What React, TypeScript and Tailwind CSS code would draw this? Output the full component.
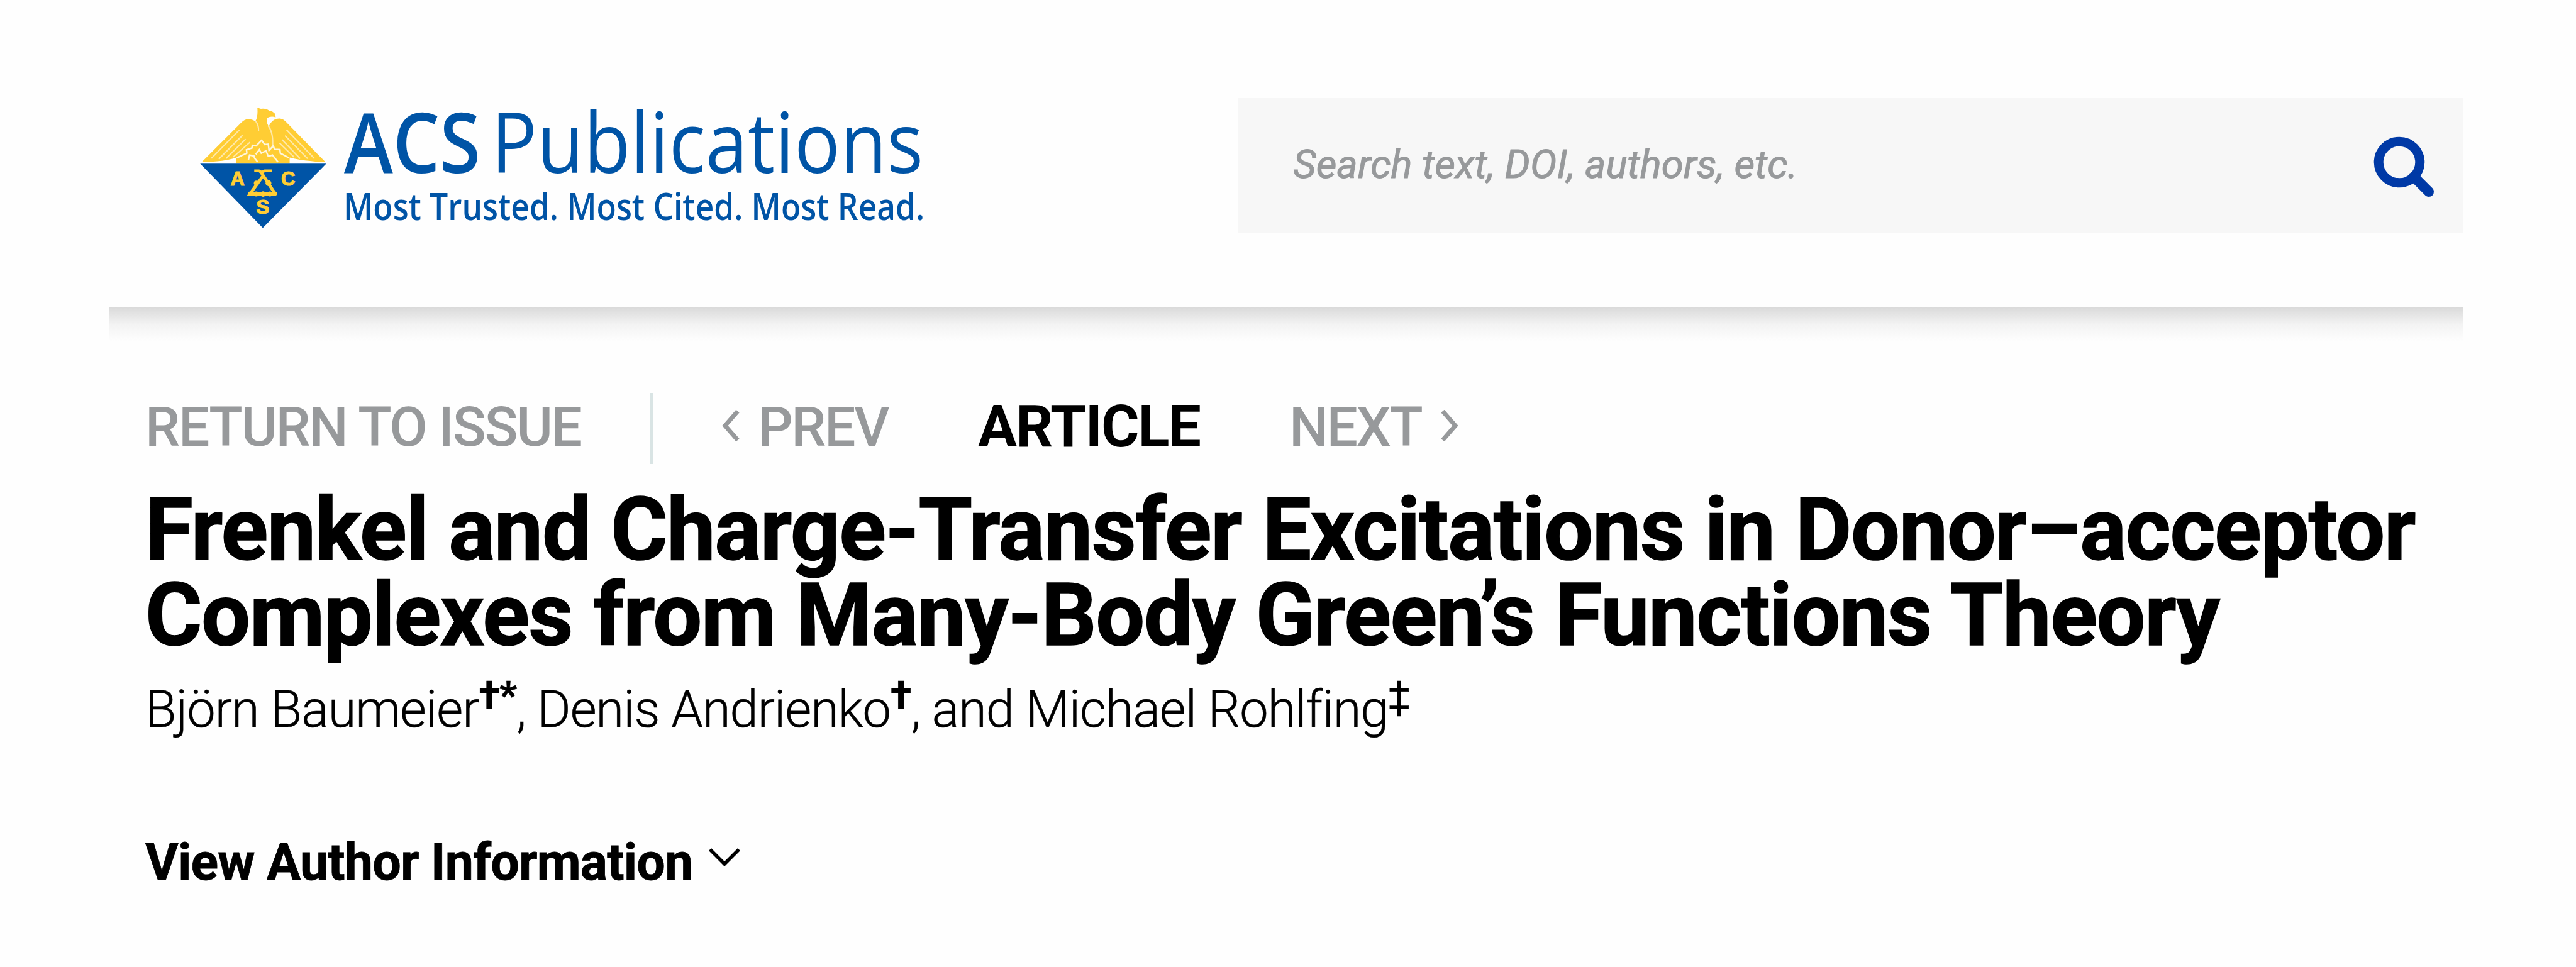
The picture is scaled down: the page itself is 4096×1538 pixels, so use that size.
const Chevron = ({ className, d }: { className: string; d: string }) => (
  <svg viewBox="0 0 28 50" fill="none" className={className} aria-hidden="true">
    <path d={d} stroke="currentColor" strokeWidth="7" />
  </svg>
);

// Eagle over the blue triangle, drawn on a 780 x 720 grid
const AcsEmblem = () => (
  <svg viewBox="60 36 656 628" className="h-[195px] w-[203px] shrink-0" aria-hidden="true">
    <g fill="#ffcd34">
      <path d="M72 322 L276 118 Q306 88 348 112 Q362 88 358 42 L376 48 Q402 44 420 58 Q452 62 452 92 Q430 84 410 94 Q400 112 416 140 Q434 98 472 98 Q492 100 508 118 L708 322 Q600 318 524 298 L524 330 L250 330 L250 300 Q170 322 72 322Z" />
    </g>
    <g fill="none" stroke="#ffe9a8" strokeWidth="7">
      <path d="M266 156 L122 302 M282 184 L160 306 M298 204 L196 304 M320 220 L234 296" />
      <path d="M508 156 L650 302 M500 186 L616 304 M484 206 L578 304 M472 224 L546 296" />
      <path d="M350 112 Q366 134 364 164 M414 136 Q442 172 436 250" />
    </g>
    <g fill="none" stroke="#fff6dc" strokeWidth="8">
      <path d="M252 300 L304 276 L302 258 L330 250 L332 236 L352 238 L380 210 L396 232 L414 230 L418 262 L440 238 L446 256 L474 258 L476 276 L520 300" />
      <path d="M312 310 L318 286 L340 290 L344 302 L360 322 M350 282 L368 258 L378 276 L402 264 L414 292 L436 286 L464 322" />
    </g>
    <path d="M64 330 H712 L386 660Z" fill="#0054a6" />
    <g fill="none" stroke="#ffcd34" strokeWidth="14">
      <path d="M342 367 H366 L380 374 L396 367 H432" />
      <path d="M374 370 L446 480 M392 386 L320 486 H452" strokeWidth="16" />
    </g>
    <g fill="#ffcd34">
      <circle cx="353" cy="430" r="13" />
      <circle cx="415" cy="430" r="15" />
      <circle cx="322" cy="484" r="11" />
      <circle cx="352" cy="486" r="13" />
      <circle cx="387" cy="486" r="14" />
      <circle cx="422" cy="486" r="13" />
      <circle cx="448" cy="484" r="11" />
    </g>
    <g fill="#ffcd34" fontFamily="Liberation Sans, sans-serif" fontWeight="700" fontSize="100" textAnchor="middle" stroke="#ffcd34" strokeWidth="4">
      <text x="256" y="442">A</text>
      <text x="516" y="442">C</text>
      <text x="386" y="589">S</text>
    </g>
  </svg>
);

const Logo = () => (
  <div className="flex items-start">
    <AcsEmblem />
    <svg
      viewBox="-8 -44 970 264"
      className="mt-[-44px] ml-[21px] h-[264px] w-[970px] shrink-0"
      fill="#0054a6"
      fontFamily="'Open Sans', sans-serif"
    >
      <text x="-2" y="106.4" fontSize="133" fontWeight="600" textLength="217" lengthAdjust="spacingAndGlyphs">ACS</text>
      <text x="232" y="106.4" fontSize="133" fontWeight="400" textLength="687" lengthAdjust="spacingAndGlyphs">Publications</text>
      <text x="-3" y="181.4" fontSize="60" fontWeight="600" textLength="924" lengthAdjust="spacingAndGlyphs">Most Trusted. Most Cited. Most Read.</text>
    </svg>
  </div>
);

const SearchIcon = () => (
  <svg viewBox="0 0 98 98" fill="none" stroke="#0039a6" className="mt-[5px] h-[98px] w-[98px]" aria-hidden="true">
    <circle cx="41" cy="41" r="32.8" strokeWidth="15" />
    <path d="M64 64 L88 88" strokeWidth="16" strokeLinecap="round" />
  </svg>
);

export default function App() {
  return (
    <div className="h-[1538px] w-[4096px] overflow-hidden bg-[#fefefe] pl-[174px] font-['Roboto',sans-serif] text-black">
      <header className="flex h-[489px] w-[3742px] items-start">
        <div className="w-[1794px] pt-[169px] pl-[143px]">
          <Logo />
        </div>
        <div className="mt-[156px] flex h-[215px] w-[1948px] items-center justify-between bg-[#f7f7f7] pr-[44px] pl-[88px]">
          <span className="pb-[4px] text-[63.6px] leading-none text-[#97999b] italic [-webkit-text-stroke:1px_#97999b]">
            Search text, DOI, authors, etc.
          </span>
          <SearchIcon />
        </div>
      </header>
      <div className="h-[54px] w-[3742px] bg-linear-to-b from-[#dadada] via-[#f3f3f3] to-[#fefefe]" />

      <main className="pl-[57px]">
        <nav className="mt-[82px] flex h-[113px] items-center text-[87.7px] leading-none font-medium tracking-[-2.2px] text-[#97999b]">
          <span className="w-[802px] pb-[3px]">RETURN TO ISSUE</span>
          <span className="h-[113px] w-[6px] bg-[#d9e4e4]" />
          <Chevron className="mb-[10px] ml-[109px] h-[50px] w-[28px]" d="M25 2 L5 25 L25 48" />
          <span className="ml-[29px] w-[350px] pb-[3px] tracking-[-2.6px]">PREV</span>
          <span className="w-[495px] pb-[5px] text-[92.5px] font-bold tracking-[-1.8px] text-black">
            ARTICLE
          </span>
          <span className="w-[241px] pb-[3px] tracking-[-2.6px]">NEXT</span>
          <Chevron className="mb-[10px] h-[50px] w-[28px]" d="M3 2 L23 25 L3 48" />
        </nav>

        <h1 className="mt-[37px] text-[138.3px] leading-[136px] font-bold tracking-[-1.45px] whitespace-nowrap [-webkit-text-stroke:1.5px_#000]">
          Frenkel and Charge-Transfer Excitations in Donor–acceptor
          <br />
          Complexes from Many-Body Green’s Functions Theory
        </h1>

        <p className="mt-[34px] text-[81px] leading-[96px] font-light tracking-[-0.95px] whitespace-nowrap [-webkit-text-stroke:0.6px_#000]">
          Björn Baumeier
          <sup className="top-0 align-[29px] text-[62px] leading-[0] font-bold">†*</sup>, Denis Andrienko
          <sup className="top-0 align-[29px] text-[62px] leading-[0] font-bold">†</sup>, and Michael Rohlfing
          <sup className="top-0 align-[29px] text-[62px] leading-[0] font-normal">‡</sup>
        </p>

        <div className="mt-[147px] flex items-center text-[80.7px] leading-[96px] font-bold tracking-[-0.8px] [-webkit-text-stroke:0.8px_#000]">
          View Author Information
          <svg viewBox="0 0 50 30" fill="none" className="mb-[18px] ml-[26px] h-[30px] w-[50px]" aria-hidden="true">
            <path d="M2 3 L25 26 L48 3" stroke="currentColor" strokeWidth="5.5" />
          </svg>
        </div>
      </main>
    </div>
  );
}
